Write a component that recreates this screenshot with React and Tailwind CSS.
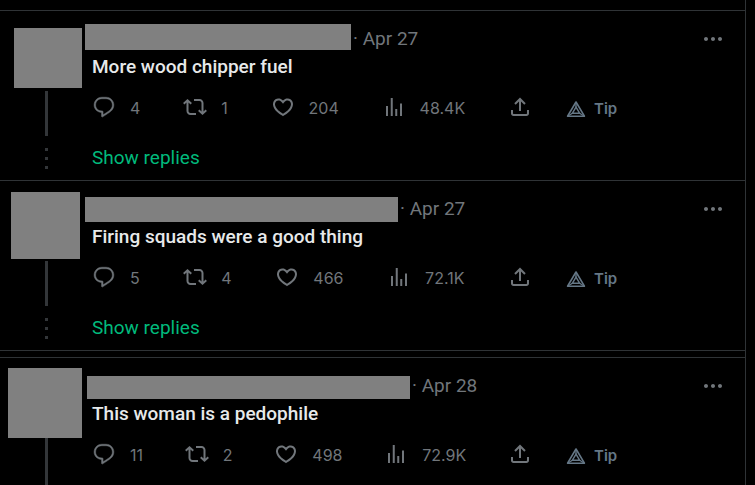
import React from 'react';
import clsx from 'clsx';

const posts = [
    {
        id: 1,
        avatar: 'ml-[14px] mt-[17px] w-[68px] h-[60px]',
        name: 'mt-[13px] w-[266px] h-[26px]',
        date: 'Apr 27',
        text: 'More wood chipper fuel',
        replies: '4',
        reposts: '1',
        likes: '204',
        views: '48.4K',
        showReplies: true,
    },
    {
        id: 2,
        avatar: 'ml-[11px] mt-[11px] w-[69px] h-[67px]',
        name: 'mt-[16px] w-[313px] h-[25px]',
        date: 'Apr 27',
        text: 'Firing squads were a good thing',
        replies: '5',
        reposts: '4',
        likes: '466',
        views: '72.1K',
        showReplies: true,
    },
    {
        id: 3,
        avatar: 'ml-[8px] mt-[10px] w-[74px] h-[70px]',
        name: 'ml-[2px] mt-[18px] w-[323px] h-[23px]',
        date: 'Apr 28',
        text: 'This woman is a pedophile',
        replies: '11',
        reposts: '2',
        likes: '498',
        views: '72.9K',
        showReplies: false,
    },
];

const icons = {
    reply: 'M14.046 2.242l-4.148-.01h-.002c-4.374 0-7.8 3.427-7.8 7.802 0 4.098 3.186 7.206 7.465 7.37v3.828c0 .108.044.286.12.403.142.225.384.347.632.347.138 0 .277-.038.402-.118.264-.168 6.473-4.14 8.088-5.506 1.902-1.61 3.04-3.97 3.043-6.312v-.017c-.006-4.367-3.43-7.787-7.8-7.788zm3.787 12.972c-1.134.96-4.862 3.405-6.772 4.643V16.67c0-.414-.335-.75-.75-.75h-.396c-3.66 0-6.318-2.476-6.318-5.886 0-3.534 2.768-6.302 6.3-6.302l4.147.01h.002c3.532 0 6.3 2.766 6.302 6.296-.003 1.91-.942 3.844-2.514 5.176z',
    repost: 'M4.5 3.88l4.432 4.14-1.364 1.46L5.5 7.55V16c0 1.1.896 2 2 2H13v2H7.5c-2.209 0-4-1.79-4-4V7.55L1.432 9.48.068 8.02 4.5 3.88zM16.5 6H11V4h5.5c2.209 0 4 1.79 4 4v8.45l2.068-1.93 1.364 1.46-4.432 4.14-4.432-4.14 1.364-1.46 2.068 1.93V8c0-1.1-.896-2-2-2z',
    like: 'M16.697 5.5c-1.222-.06-2.679.51-3.89 2.16l-.805 1.09-.806-1.09C9.984 6.01 8.526 5.44 7.304 5.5c-1.243.07-2.349.78-2.91 1.91-.552 1.12-.633 2.78.479 4.82 1.074 1.97 3.257 4.27 7.129 6.61 3.87-2.34 6.052-4.64 7.126-6.61 1.111-2.04 1.03-3.7.477-4.82-.561-1.13-1.666-1.84-2.908-1.91zm4.187 7.69c-1.351 2.48-4.001 5.12-8.379 7.67l-.503.3-.504-.3c-4.379-2.55-7.029-5.19-8.382-7.67-1.36-2.5-1.41-4.86-.514-6.67.887-1.79 2.647-2.91 4.601-3.01 1.651-.09 3.368.56 4.798 2.01 1.429-1.45 3.146-2.1 4.796-2.01 1.954.1 3.714 1.22 4.601 3.01.896 1.81.846 4.17-.514 6.67z',
    views: 'M8.75 21V3h2v18h-2zM18 21V8.5h2V21h-2zM4 21l.004-10h2L6 21H4zm9.248 0v-7h2v7h-2z',
    share: 'M12 2.59l5.7 5.7-1.41 1.42L13 6.41V16h-2V6.41l-3.3 3.3-1.41-1.42L12 2.59zM21 15l-.02 3.51c0 1.38-1.12 2.49-2.5 2.49H5.5C4.11 21 3 19.88 3 18.5V15h2v3.5c0 .28.22.5.5.5h12.98c.28 0 .5-.22.5-.5L19 15h2z',
    more: 'M3 12c0-1.1.9-2 2-2s2 .9 2 2-.9 2-2 2-2-.9-2-2zm9 2c1.1 0 2-.9 2-2s-.9-2-2-2-2 .9-2 2 .9 2 2 2zm7 0c1.1 0 2-.9 2-2s-.9-2-2-2-2 .9-2 2 .9 2 2 2z',
};

const Icon = ({ name, className }) => (
    <svg viewBox="0 0 24 24" className={ clsx('w-6 h-6 shrink-0 fill-current', className) } aria-hidden="true">
        <path d={ icons[name] } />
    </svg>
);

const TipIcon = () => (
    <svg viewBox="0 0 20 18" className="w-5 h-[18px] shrink-0" fill="none" stroke="currentColor" aria-hidden="true">
        <path d="M10 2 18.4 16.2H1.6L10 2Z" strokeWidth="1.6" strokeLinejoin="round" />
        <path d="M10 7.2 13.6 13.2H6.4L10 7.2Z" strokeWidth="1.5" />
        <path d="M10 2v5.2M1.6 16.2l4.8-3M18.4 16.2l-4.8-3" strokeWidth="1.3" />
    </svg>
);

const Action = ({ icon, label, count, iconClass }) => (
    <button type="button" aria-label={ label } className="h-6 flex items-center gap-[14px]">
        <Icon name={ icon } className={ iconClass } />
        { count && <span className="font-[Inter,sans-serif] text-base leading-6 pt-[2px]">{ count }</span> }
    </button>
);

const Post = ({ post }) => (
    <article className={ clsx('flex', post.showReplies && 'border-b border-[#2f3336]') }>
        <div className="w-[85px] shrink-0 flex flex-col">
            <div className="h-20">
                <div className={ clsx('bg-[#808080]', post.avatar) } />
            </div>
            <div className={ clsx('ml-[45px] w-[3px] bg-[#333639]', post.showReplies ? 'h-[45px]' : 'grow') } />
            { post.showReplies && (
                <div className="ml-[45px] mt-3 flex flex-col gap-[6px]">
                    <span className="w-[3px] h-[3px] bg-[#333639]" />
                    <span className="w-[3px] h-[3px] bg-[#333639]" />
                    <span className="w-[3px] h-[3px] bg-[#333639]" />
                </div>
            ) }
        </div>

        <div className="grow min-w-0 pr-5">
            <header className="h-[42px] flex items-start text-[#71767b]">
                <div className={ clsx('bg-[#808080]', post.name) } />
                <span className="ml-[2px] mt-4 text-[19px] leading-6">· { post.date }</span>
                <button type="button" aria-label="More" className="ml-auto mt-4">
                    <Icon name="more" />
                </button>
            </header>

            <div className="pl-[7px]">
                <p className="text-[19px] leading-7 font-medium text-[#e7e9ea]">{ post.text }</p>

                <div className="mt-[14px] h-6 flex items-center gap-[34px] text-[#71767b]">
                    <div className="grow max-w-[440px] flex items-center justify-between">
                        <Action icon="reply" label="Reply" count={ post.replies } iconClass="stroke-current stroke-[0.5]" />
                        <Action icon="repost" label="Repost" count={ post.reposts } />
                        <Action icon="like" label="Like" count={ post.likes } />
                        <Action icon="views" label="Views" count={ post.views } />
                        <Action icon="share" label="Share" />
                    </div>
                    <button type="button" className="flex items-center gap-2 pt-1 text-[#657786]">
                        <TipIcon />
                        <span className="font-[Inter,sans-serif] text-[15px] leading-6 font-semibold">Tip</span>
                    </button>
                </div>

                { post.showReplies && (
                    <a href="#replies" className="block mt-[27px] mb-[10px] text-[19px] leading-6 text-[#00ba7c]">
                        Show replies
                    </a>
                ) }
            </div>
        </div>
    </article>
);

export default function App() {
    return (
        <div className="min-h-screen bg-black pr-[9px] font-[Roboto,sans-serif]">
            <main className="min-h-screen flex flex-col border-r border-[#2f3336]">
                <div className="h-[11px] border-b border-[#2f3336]" />
                <Post post={ posts[0] } />
                <Post post={ posts[1] } />
                <div className="h-[7px] border-b border-[#2f3336]" />
                <div className="grow flex flex-col [&>article]:grow [&>article]:min-h-[127px]">
                    <Post post={ posts[2] } />
                </div>
            </main>
        </div>
    );
}
